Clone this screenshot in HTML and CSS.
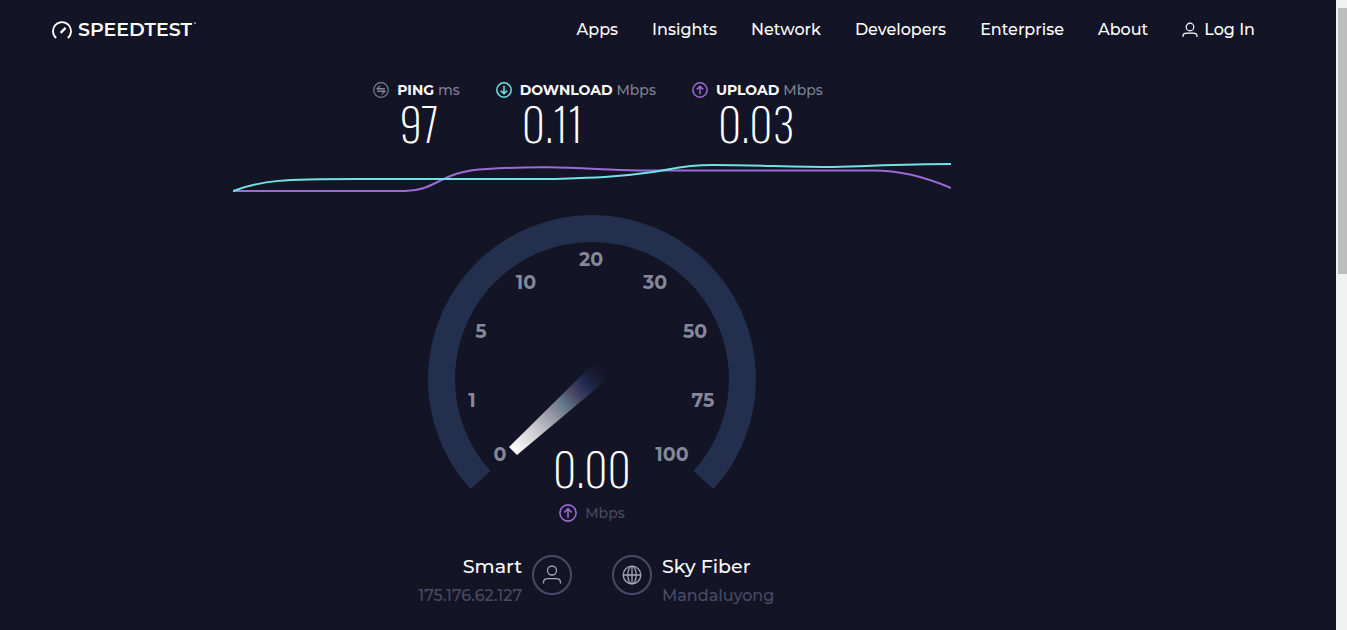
FILE: index.html
```html
<!DOCTYPE html>
<html lang="en">
<head>
  <meta charset="UTF-8" />
  <meta name="viewport" content="width=device-width, initial-scale=1.0"/>
  <title>Speedtest</title>
  <link rel="stylesheet" href="styles.css">
</head>
<body>
  <div class="page">
    <header class="header">
      <a class="logo" href="#">
        <svg width="20" height="19" viewBox="0 0 20 19" fill="none" stroke="currentColor" stroke-width="1.800">
          <path d="M4.200 17A9 9 0 1 1 15.800 17" />
          <path d="M8.600 11.900L13.600 6.900" stroke-width="2.200" />
        </svg>
        <span>SPEEDTEST</span>
        <svg class="mark" width="2" height="2" viewBox="0 0 2 2"><circle cx="1" cy="1" r="0.8" fill="currentColor" /></svg>
      </a>
      <nav class="nav">
        <a href="#">Apps</a>
        <a href="#">Insights</a>
        <a href="#">Network</a>
        <a href="#">Developers</a>
        <a href="#">Enterprise</a>
        <a href="#">About</a>
        <a class="login" href="#">
          <svg width="16" height="16" viewBox="0 0 16 16" fill="none" stroke="currentColor" stroke-width="1.200">
            <circle cx="8" cy="5" r="3.800" />
            <path d="M1 15v-1c0-2 2-2.800 4-2.800h6c2 0 4 .8 4 2.800v1" />
          </svg>
          Log In
        </a>
      </nav>
    </header>

    <main class="main">
      <!-- Results -->
      <section class="results">
        <div class="result">
          <svg class="gray" width="16" height="16" viewBox="0 0 16 16" fill="none" stroke="currentColor" stroke-width="1.200">
            <circle cx="8" cy="8" r="7.300" />
            <path d="M12 6.500H4.300L7.500 3.600M4 9.500h7.700L8.500 12.400M4.300 6.500C4.300 8 5 8 8 8s3.700 0 3.700 1.500" />
          </svg>
          <h2>PING <span>ms</span></h2>
          <p class="value">97</p>
        </div>
        <div class="result">
          <svg class="cyan" width="16" height="16" viewBox="0 0 16 16" fill="none" stroke="currentColor" stroke-width="1.500">
            <circle cx="8" cy="8" r="7.200" />
            <path d="M8 3.800v8M4.800 8.600L8 11.800l3.200-3.200" />
          </svg>
          <h2>DOWNLOAD <span>Mbps</span></h2>
          <p class="value">0.11</p>
        </div>
        <div class="result">
          <svg class="purple" width="16" height="16" viewBox="0 0 16 16" fill="none" stroke="currentColor" stroke-width="1.500">
            <circle cx="8" cy="8" r="7.200" />
            <path d="M8 12.200v-8M4.800 7.400L8 4.200l3.200 3.200" />
          </svg>
          <h2>UPLOAD <span>Mbps</span></h2>
          <p class="value">0.03</p>
        </div>
      </section>

      <!-- Speed history -->
      <svg class="graph" viewBox="0 0 718 34" fill="none" stroke-width="2">
        <path class="purple" stroke="currentColor" d="M0 31H172C204 31 206 11 254 9C320 5 350 9 404 10.500H640C670 10.500 695 18 718 28" />
        <path class="cyan" stroke="currentColor" d="M0 31C30 20 50 19 125 19H316C350 18 378 18 420 12C440 9 450 5 480 5C520 5 560 7 600 7C640 6 670 4 718 4" />
      </svg>

      <!-- Gauge -->
      <section class="gauge">
        <svg class="dial" viewBox="0 0 328 276">
          <defs>
            <linearGradient id="needle" gradientUnits="userSpaceOnUse" x1="84" y1="236" x2="180" y2="150">
              <stop offset="0" stop-color="#ffffff" />
              <stop offset="0.25" stop-color="#c9c8cd" />
              <stop offset="0.43" stop-color="#92949f" />
              <stop offset="0.55" stop-color="#5f7488" />
              <stop offset="0.65" stop-color="#494764" />
              <stop offset="0.77" stop-color="#222a50" />
              <stop offset="1" stop-color="#141526" stop-opacity="0" />
            </linearGradient>
          </defs>
          <path class="ring" d="M52.600 265.200A150.500 150.500 0 1 1 275.400 265.200" />
          <polygon fill="url(#needle)" points="81,232 89,240 182,162 168,146" />
          <g class="ticks">
            <text x="72" y="246">0</text>
            <text x="44" y="192">1</text>
            <text x="53" y="123">5</text>
            <text x="98" y="74">10</text>
            <text x="163" y="51">20</text>
            <text x="227" y="74">30</text>
            <text x="267" y="123">50</text>
            <text x="275" y="192">75</text>
            <text x="244" y="246">100</text>
          </g>
        </svg>
        <div class="readout">
          <p class="value">0.00</p>
          <p class="unit">
            <svg class="purple" width="18" height="18" viewBox="0 0 16 16" fill="none" stroke="currentColor" stroke-width="1.400">
              <circle cx="8" cy="8" r="7.200" />
              <path d="M8 12.200v-8M4.800 7.400L8 4.200l3.200 3.200" />
            </svg>
            Mbps
          </p>
        </div>
      </section>

      <!-- Provider and server -->
      <section class="hosts">
        <div class="host client">
          <div>
            <h3>Smart</h3>
            <p>175.176.62.127</p>
          </div>
          <svg width="40" height="40" viewBox="0 0 40 40" fill="none">
            <circle cx="20" cy="20" r="19" stroke="#4b4a66" stroke-width="2" />
            <g stroke="#a4a7b8" stroke-width="1.300">
              <circle cx="20" cy="15.500" r="4.500" />
              <path d="M11.500 28.500v-1c0-2.500 2-3.800 4.500-3.800h8c2.500 0 4.500 1.300 4.500 3.800v1" />
            </g>
          </svg>
        </div>
        <div class="host">
          <svg width="40" height="40" viewBox="0 0 40 40" fill="none">
            <circle cx="20" cy="20" r="19" stroke="#4b4a66" stroke-width="2" />
            <g stroke="#a4a7b8" stroke-width="1.300">
              <circle cx="20" cy="20" r="8.800" />
              <ellipse cx="20" cy="20" rx="4.200" ry="8.800" />
              <path d="M11.200 20h17.600M20 11.200v17.600" />
            </g>
          </svg>
          <div>
            <h3>Sky Fiber</h3>
            <p>Mandaluyong</p>
          </div>
        </div>
      </section>
    </main>
  </div>
  <div class="scrollbar"><div class="thumb"></div></div>
</body>
</html>
```
FILE: styles.css
```css
* {
  margin: 0;
  padding: 0;
  box-sizing: border-box;
}

body {
  display: flex;
  min-height: 100vh;
  background: #131425;
  color: #fff;
  font-family: Montserrat, Inter, "Liberation Sans", sans-serif;
}

a {
  color: inherit;
  text-decoration: none;
}

svg {
  display: block;
  flex-shrink: 0;
}

.page {
  flex: 1;
}

.gray {
  color: #7f8294;
}

.cyan {
  color: #6fe3e6;
}

.purple {
  color: #9d6bd6;
}

/* Header */
.header {
  display: flex;
  justify-content: space-between;
  align-items: center;
  height: 60px;
  padding: 0 81px 0 52px;
}

.logo {
  display: flex;
  align-items: center;
  gap: 6px;
  font-size: 19px;
  line-height: 24px;
  font-weight: 600;
}

.mark {
  align-self: flex-start;
  margin: 4px 0 0 -4px;
}

.nav {
  display: flex;
  gap: 34px;
  font-size: 16px;
  line-height: 20px;
  font-weight: 500;
}

.login {
  display: flex;
  align-items: center;
  gap: 6px;
}

/* Main column, the right side stays free */
.main {
  display: flex;
  flex-direction: column;
  align-items: center;
  padding: 20px 152px 0 0;
}

.results {
  display: flex;
  gap: 36px;
  padding-left: 12px;
}

.result {
  display: grid;
  grid-template-columns: 16px auto;
  column-gap: 8px;
  align-items: center;
}

.result h2 {
  font-size: 14px;
  line-height: 20px;
  font-weight: 700;
}

.result h2 span {
  color: #7f8294;
  font-weight: 500;
}

.value {
  font-family: Oswald, "Roboto Condensed", Roboto, sans-serif;
  font-size: 45px;
  line-height: 46px;
  font-weight: 200;
}

.result .value {
  grid-column: 2;
  padding-left: 2px;
}

.graph {
  width: 100%;
  max-width: 718px;
  margin-top: 14px;
}

/* Gauge */
.gauge {
  position: relative;
  width: 328px;
  margin-top: 21px;
  padding-bottom: 32px;
}

.ring {
  fill: none;
  stroke: #22304d;
  stroke-width: 27;
}

.ticks {
  fill: #85889a;
  font-size: 19px;
  font-weight: 700;
  text-anchor: middle;
}

.readout {
  position: absolute;
  left: 0;
  right: 0;
  bottom: 0;
  text-align: center;
}

.unit {
  display: flex;
  justify-content: center;
  align-items: center;
  gap: 8px;
  margin-top: 12px;
  color: #4b4a66;
  font-size: 14px;
  line-height: 20px;
  font-weight: 500;
}

/* Hosts */
.hosts {
  display: grid;
  grid-template-columns: 1fr 1fr;
  gap: 40px;
  margin-top: 32px;
}

.host {
  display: flex;
  align-items: flex-start;
  gap: 10px;
}

.host.client {
  justify-content: flex-end;
  text-align: right;
}

.host h3 {
  font-size: 19px;
  line-height: 24px;
  font-weight: 500;
}

.host p {
  margin-top: 5px;
  color: #4b4a66;
  font-size: 16px;
  line-height: 24px;
  font-weight: 500;
}

/* Scrollbar */
.scrollbar {
  width: 11px;
  padding: 8px 0 0 2px;
  background: #f1f1f1;
}

.thumb {
  height: 266px;
  background: #bdbdbd;
}
```
